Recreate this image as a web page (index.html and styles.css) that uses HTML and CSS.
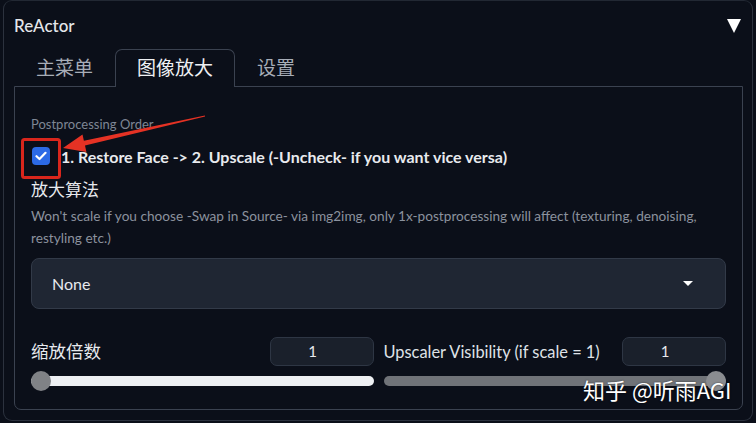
FILE: index.html
```html
<!DOCTYPE html>
<html>
<head lang="en">
    <meta charset="UTF-8">
    <title>ReActor</title>
    <link rel="stylesheet" href="styles.css">
</head>
<body>

<div class="panel">
    <div class="header">
        <span class="title">ReActor</span>
        <span class="fold"></span>
    </div>

    <div class="tabs">
        <div class="tab">主菜单</div>
        <div class="tab active">图像放大</div>
        <div class="tab">设置</div>
    </div>

    <div class="content">
        <div class="small-label">Postprocessing Order</div>
        <div class="check-row">
            <span class="checkbox">
                <svg width="12" height="10" viewBox="0 0 12 10"><path d="M1.5 5.2 L4.5 8 L10.5 1.8" fill="none" stroke="#fff" stroke-width="2.2" stroke-linecap="round" stroke-linejoin="round"/></svg>
            </span>
            <span class="check-text">1. Restore Face -&gt; 2. Upscale (-Uncheck- if you want vice versa)</span>
        </div>

        <div class="block-title">放大算法</div>
        <div class="desc">Won't scale if you choose -Swap in Source- via img2img, only 1x-postprocessing will affect (texturing, denoising, restyling etc.)</div>

        <div class="dropdown">
            <span>None</span>
            <span class="caret"></span>
        </div>

        <div class="sliders">
            <div class="slider-col">
                <div class="slider-head">
                    <span class="block-title">缩放倍数</span>
                    <span class="num">1</span>
                </div>
                <div class="track light"><span class="thumb left"></span></div>
            </div>
            <div class="slider-col">
                <div class="slider-head">
                    <span class="slider-label">Upscaler Visibility (if scale = 1)</span>
                    <span class="num">1</span>
                </div>
                <div class="track dark"><span class="thumb right"></span></div>
            </div>
        </div>
    </div>
</div>

<div class="watermark">知乎 @听雨AGI</div>

<svg class="marks" width="756" height="423" viewBox="0 0 756 423">
    <rect x="22.5" y="139.5" width="37" height="38" rx="2" fill="none" stroke="#d9261c" stroke-width="3"/>
    <polygon points="63,148 86.4,151.9 85,145.6 205.1,116.5 204.9,115.5 83.9,140.7 82.5,134.4" fill="#e53224"/>
</svg>

</body>
</html>
```

FILE: styles.css
```css
*{
    margin: 0px;
    padding: 0px;
    box-sizing: border-box;
}
body{
    background-color: #0b0f19;
    color: #e5e7eb;
    font-family: "Lato", "Noto Sans CJK SC", sans-serif;
    width: 756px;
    height: 423px;
    overflow: hidden;
    position: relative;
}
.panel{
    margin: 0px 3px;
    height: 421px;
    border: 1px solid #2c323e;
    border-top-color: #222833;
    border-radius: 9px;
    padding: 0px 9px 0px 10px;
}
.header{
    height: 48px;
    display: flex;
    align-items: center;
    justify-content: space-between;
}
.title{
    font-size: 17px;
    font-weight: 500;
    margin-top: 1px;
}
.fold{
    width: 0;
    height: 0;
    border-left: 7px solid transparent;
    border-right: 7px solid transparent;
    border-top: 14px solid #ffffff;
    margin-right: 2px;
    margin-top: 1px;
}
.tabs{
    display: flex;
    height: 37px;
    position: relative;
    z-index: 1;
}
.tab{
    padding: 0px 21px;
    font-size: 19px;
    line-height: 36px;
    color: #a7adb7;
    border: 1px solid transparent;
    border-bottom: none;
}
.tab.active{
    color: #eef0f3;
    border-color: #3b4250;
    border-radius: 7px 7px 0px 0px;
    background-color: #0b0f19;
    height: 38px;
}
.content{
    height: 324px;
    border: 1px solid #3b4250;
    border-radius: 0px 0px 7px 7px;
    padding: 29px 16px 0px 16px;
}
.small-label{
    font-size: 13px;
    line-height: 16px;
    color: #7e8694;
}
.check-row{
    margin-top: 13px;
    height: 22px;
    display: flex;
    align-items: center;
}
.checkbox{
    width: 18px;
    height: 18px;
    margin-left: 1px;
    border-radius: 4px;
    background-color: #2c6ae6;
    display: flex;
    align-items: center;
    justify-content: center;
}
.check-text{
    margin-left: 11px;
    font-size: 16px;
    font-weight: 700;
    color: #e8eaee;
}
.block-title{
    display: block;
    margin-top: 11px;
    font-size: 17px;
    line-height: 24px;
    color: #e8eaee;
}
.desc{
    margin-top: 3px;
    font-size: 13.65px;
    line-height: 22px;
    color: #8b929e;
}
.dropdown{
    margin-top: 9px;
    height: 51px;
    background-color: #1f2633;
    border: 1px solid #323a48;
    border-radius: 8px;
    display: flex;
    align-items: center;
    justify-content: space-between;
    padding: 0px 32px 0px 20px;
    font-size: 16px;
    color: #e8eaee;
}
.caret{
    width: 0;
    height: 0;
    border-left: 5px solid transparent;
    border-right: 5px solid transparent;
    border-top: 5px solid #ffffff;
}
.sliders{
    margin-top: 28px;
    display: flex;
    gap: 10px;
}
.slider-col{
    flex: 1;
}
.slider-head{
    display: flex;
    justify-content: space-between;
    align-items: center;
    height: 29px;
}
.slider-head .block-title{
    margin-top: 0px;
    font-size: 17.5px;
}
.slider-label{
    font-size: 16.4px;
    color: #dfe2e7;
}
.num{
    width: 104px;
    height: 29px;
    border: 1px solid #2e3644;
    background-color: #1a202b;
    border-radius: 7px;
    text-align: center;
    padding-right: 18px;
    font-size: 15px;
    line-height: 27px;
    color: #e8eaee;
}
.track{
    margin-top: 10px;
    height: 10px;
    border-radius: 5px;
    position: relative;
}
.track.light{
    background-color: #eef0f3;
}
.track.dark{
    background-color: #707378;
}
.thumb{
    position: absolute;
    top: -5px;
    width: 20px;
    height: 20px;
    border-radius: 50%;
    background-color: #808286;
}
.thumb.left{
    left: 0px;
}
.thumb.right{
    right: 0px;
    background-color: #8a8c90;
}
.watermark{
    position: absolute;
    left: 583px;
    top: 375px;
    font-size: 22px;
    line-height: 28px;
    color: #ffffff;
    font-family: "Noto Sans CJK SC", sans-serif;
    text-shadow: 0px 0px 2px rgba(0, 0, 0, 0.6);
}
.marks{
    position: absolute;
    left: 0px;
    top: 0px;
}
```
